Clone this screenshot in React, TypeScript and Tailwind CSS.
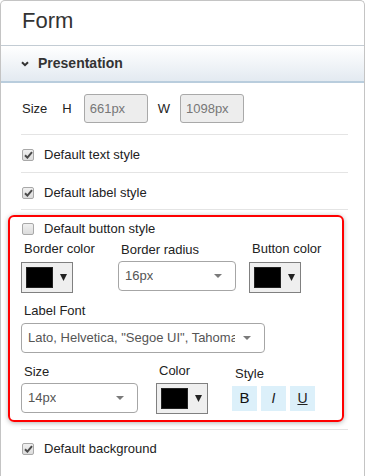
import React from 'react';

const font = { fontFamily: '"Liberation Sans", Arial, sans-serif' };

function Check({ checked }: { checked: boolean }) {
  return (
    <div className="w-[12px] h-[12px] rounded-[2px] border border-[#a8a8a8] bg-gradient-to-b from-[#f0f0f0] to-[#dcdcdc] flex items-center justify-center flex-shrink-0">
      {checked && (
        <svg width="9" height="8" viewBox="0 0 9 8">
          <path d="M1 4.2 L3.4 6.6 L8 1.2" fill="none" stroke="#4a4a4a" strokeWidth="2" />
        </svg>
      )}
    </div>
  );
}

function Caret() {
  return (
    <svg width="8" height="4" viewBox="0 0 8 4" className="flex-shrink-0">
      <path d="M0 0 L8 0 L4 4 Z" fill="#7a7a7a" />
    </svg>
  );
}

function Swatch({ className = '' }: { className?: string }) {
  return (
    <div className={`w-[52px] h-[31px] border border-[#808080] bg-[#efefef] flex items-center pl-[4px] gap-[7px] ${className}`}>
      <div className="w-[27px] h-[21px] bg-black border border-[#222]" />
      <svg width="7" height="7" viewBox="0 0 7 7">
        <path d="M0 0 L7 0 L3.5 7 Z" fill="#222" />
      </svg>
    </div>
  );
}

function Select({ value, w, textW }: { value: string; w: string; textW?: string }) {
  return (
    <div className={`${w} h-[30px] rounded-[4px] border border-[#a6a6a6] bg-white flex items-center pl-[6px] pr-[13px] justify-between`}>
      <span className={`text-[13px] text-[#555] whitespace-nowrap overflow-hidden ${textW ?? ''}`}>{value}</span>
      <Caret />
    </div>
  );
}

function Label({ children, className = '' }: { children: React.ReactNode; className?: string }) {
  return <div className={`text-[13px] leading-[15px] text-[#222] pl-[3px] ${className}`}>{children}</div>;
}

export default function App() {
  return (
    <div className="w-[366px] h-[476px] bg-white overflow-hidden text-[#222]" style={font}>
      <div className="w-[365px] min-h-[480px] border border-b-0 border-[#c4c4c4] rounded-t-[5px]">
        {/* title */}
        <div className="h-[45px] border-b border-[#c3ccd4] pl-[21px] flex items-center">
          <h1 className="text-[22px] text-[#333] leading-none -mt-[4px]">Form</h1>
        </div>

        {/* section header */}
        <div className="h-[37px] border-b-2 border-[#b9cddd] bg-gradient-to-b from-white to-[#e3eaf1] flex items-center pl-[20px] gap-[9px]">
          <svg width="8" height="6" viewBox="0 0 8 6">
            <path d="M1 1.2 L4 4.2 L7 1.2" fill="none" stroke="#333" strokeWidth="2" />
          </svg>
          <span className="text-[14px] font-bold text-[#333]">Presentation</span>
        </div>

        <div className="pl-[20px] pr-[16px]">
          {/* size row */}
          <div className="pt-[11px] pb-[11px] border-b border-[#e4e4e4] flex items-center text-[13px]">
            <span className="ml-[1px]">Size</span>
            <span className="ml-[15px]">H</span>
            <div className="ml-[12px] w-[64px] h-[29px] rounded-[3px] border border-[#a9a9a9] bg-[#ededed] text-[#777] flex items-center pl-[5px]">661px</div>
            <span className="ml-[10px]">W</span>
            <div className="ml-[10px] w-[64px] h-[29px] rounded-[3px] border border-[#a9a9a9] bg-[#ededed] text-[#777] flex items-center pl-[5px]">1098px</div>
          </div>

          {/* default text style */}
          <div className="h-[38px] pt-[3px] border-b border-[#e4e4e4] flex items-center gap-[10px] text-[13px] pl-[1px]">
            <Check checked />
            <span>Default text style</span>
          </div>

          {/* default label style */}
          <div className="h-[37px] pt-[3px] border-b border-[#e4e4e4] flex items-center gap-[10px] text-[13px] pl-[1px]">
            <Check checked />
            <span>Default label style</span>
          </div>

          {/* highlighted button style block */}
          <div className="mt-[5px] -ml-[13px] w-[336px] border-2 border-[#f00] rounded-[6px] shadow-[0_1px_5px_rgba(0,0,0,0.3)] pl-[11px] pb-[6px]">
            <div className="h-[24px] flex items-center gap-[10px] text-[13px] pl-[1px]">
              <Check checked={false} />
              <span>Default button style</span>
            </div>

            <div className="flex">
              <div className="w-[97px]">
                <Label>Border color</Label>
                <Swatch className="mt-[6px]" />
              </div>
              <div className="w-[131px]">
                <Label className="mt-[1px]">Border radius</Label>
                <div className="mt-[4px]">
                  <Select value="16px" w="w-[118px]" />
                </div>
              </div>
              <div>
                <Label>Button color</Label>
                <Swatch className="mt-[6px]" />
              </div>
            </div>

            <Label className="mt-[10px]">Label Font</Label>
            <div className="mt-[5px]">
              <Select value={'Lato, Helvetica, "Segoe UI", Tahoma, sans-serif'} w="w-[244px]" textW="w-[207px]" />
            </div>

            <div className="flex mt-[10px]">
              <div className="w-[135px]">
                <Label className="mt-[1px]">Size</Label>
                <div className="mt-[4px]">
                  <Select value="14px" w="w-[117px]" />
                </div>
              </div>
              <div className="w-[76px]">
                <Label>Color</Label>
                <Swatch className="mt-[5px]" />
              </div>
              <div>
                <Label className="mt-[3px]">Style</Label>
                <div className="mt-[5px] flex gap-[3px]">
                  <button className="w-[25px] h-[25px] bg-[#dcf0fa] text-[15px] text-[#111] flex items-center justify-center">B</button>
                  <button className="w-[25px] h-[25px] bg-[#dcf0fa] text-[14px] text-[#222] italic flex items-center justify-center ml-[1px]">I</button>
                  <button className="w-[25px] h-[25px] bg-[#dcf0fa] text-[14px] text-[#222] underline flex items-center justify-center ml-[1px]">U</button>
                </div>
              </div>
            </div>
          </div>

          {/* default background */}
          <div className="mt-[7px] border-t border-[#e4e4e4] h-[38px] flex items-center gap-[10px] text-[13px] pl-[1px]">
            <Check checked />
            <span>Default background</span>
          </div>
        </div>
      </div>
    </div>
  );
}
